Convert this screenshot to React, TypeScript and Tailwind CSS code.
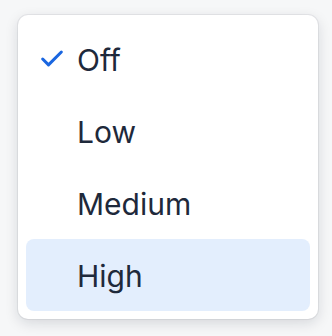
import { Check } from 'lucide-react';

const OPTIONS = ['Off', 'Low', 'Medium', 'High'];

export default function App() {
  const selected = 'Off';
  const hovered = 'High';

  return (
    <div className="w-[332px] h-[336px] bg-[#f6f7f8] pt-[15px] pl-[18px]" style={{ fontFamily: 'Inter, "Noto Sans", sans-serif' }}>
      <div className="w-[300px] rounded-[10px] bg-white p-2 shadow-[0_4px_14px_rgba(15,23,42,0.14),0_0_0_1px_rgba(15,23,42,0.06)]">
        {OPTIONS.map((opt) => (
          <div
            key={opt}
            className={`flex h-[72px] items-center rounded-lg ${opt === hovered ? 'bg-[#e3eefd]' : ''}`}
          >
            <span className="flex w-[51px] justify-end pr-[11px]">
              {opt === selected && <Check className="h-[28px] w-[28px] text-[#1a66e0]" strokeWidth={2.6} />}
            </span>
            <span className="text-[30px] leading-none pt-[2px] text-[#1e293b]">{opt}</span>
          </div>
        ))}
      </div>
    </div>
  );
}
